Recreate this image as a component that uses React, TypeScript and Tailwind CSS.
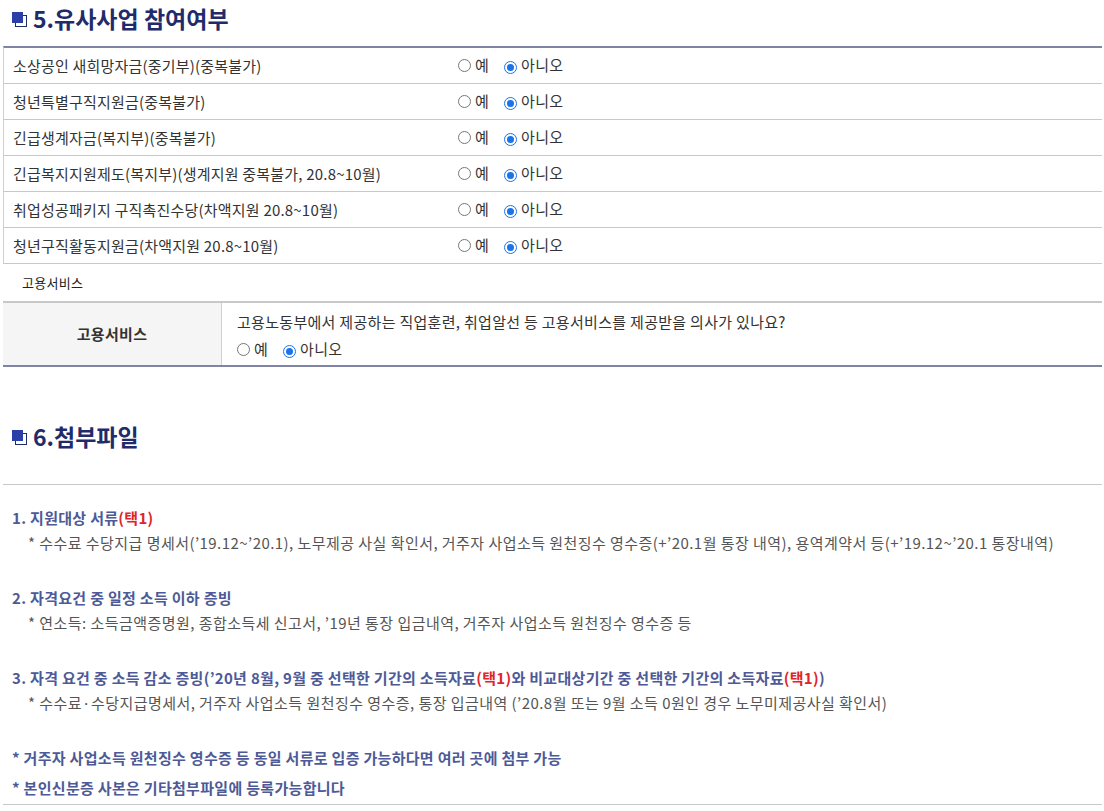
import React from 'react'

const font = { fontFamily: '"Noto Sans CJK KR", "Noto Sans", sans-serif' }

const rows = [
  '소상공인 새희망자금(중기부)(중복불가)',
  '청년특별구직지원금(중복불가)',
  '긴급생계자금(복지부)(중복불가)',
  '긴급복지지원제도(복지부)(생계지원 중복불가, 20.8~10월)',
  '취업성공패키지 구직촉진수당(차액지원 20.8~10월)',
  '청년구직활동지원금(차액지원 20.8~10월)',
]

function Radio({ checked }: { checked?: boolean }) {
  return checked ? (
    <span className="inline-flex w-[13px] h-[13px] rounded-full border-[1.5px] border-[#1a73e8] items-center justify-center bg-white">
      <span className="w-[7px] h-[7px] rounded-full bg-[#1a73e8]" />
    </span>
  ) : (
    <span className="inline-block w-[13px] h-[13px] rounded-full border border-[#767676] bg-white" />
  )
}

function YesNo() {
  return (
    <div className="flex items-center text-[15px] text-[#333] tracking-[0.3px]">
      <Radio />
      <span className="ml-[4px]">예</span>
      <span className="ml-[15px]"><Radio checked /></span>
      <span className="ml-[4px]">아니오</span>
    </div>
  )
}

function Title({ children }: { children: React.ReactNode }) {
  return (
    <div className="flex items-center gap-[6px] pl-[12px]">
      <span className="relative w-[15px] h-[15px] mt-[2px]">
        <span className="absolute left-[3px] top-[3px] w-[12px] h-[12px] border border-[#1f2b6b] bg-white" />
        <span className="absolute left-0 top-0 w-[11px] h-[11px] bg-[#2b3fa8]" />
      </span>
      <span className="text-[23px] font-bold text-[#1f2b6b]">{children}</span>
    </div>
  )
}

export default function App() {
  return (
    <div className="w-[1104px] h-[811px] bg-white overflow-hidden" style={font}>
      <div className="h-[36px] flex items-center">
        <Title>5.유사사업 참여여부</Title>
      </div>

      <div className="mt-[10px] ml-[3px] mr-[2px] border-t-2 border-[#7f84a4] border-l border-l-[#d0d0d0]">
        {rows.map((r) => (
          <div key={r} className="flex items-center h-[36px] border-b border-[#c8c8c8]">
            <div className="w-[454px] pl-[9px] pt-[1px] text-[15px] text-[#333] tracking-[0.2px]">{r}</div>
            <YesNo />
          </div>
        ))}
      </div>

      <div className="h-[37px] flex items-center pl-[22px] text-[13px] text-[#222] tracking-[0.3px]">고용서비스</div>

      <div className="ml-[3px] mr-[2px] flex border-t-2 border-[#c8c8c8] border-b-2 border-b-[#7f84a4]">
        <div className="w-[219px] bg-[#f5f5f5] border-r border-[#d0d0d0] flex items-center justify-center text-[15px] font-bold text-[#333] tracking-[0.3px]">
          고용서비스
        </div>
        <div className="pl-[15px] pt-[7px] text-[15px] text-[#333] tracking-[0.3px]">
          <div className="leading-[24px]">고용노동부에서 제공하는 직업훈련, 취업알선 등 고용서비스를 제공받을 의사가 있나요?</div>
          <div className="h-[31px] flex items-center"><YesNo /></div>
        </div>
      </div>

      <div className="h-[51px]" />
      <div className="h-[36px] flex items-center">
        <Title>6.첨부파일</Title>
      </div>

      <div className="mt-[30px] ml-[3px] mr-[2px] border-t border-[#c8c8c8]" />

      <div className="pl-[12px] text-[15px] tracking-[0.3px]">
        <div className="mt-[22px] leading-[22px] font-semibold text-[#4d5a97]">
          1. 지원대상 서류<span className="text-[#e0242b]">(택1)</span>
        </div>
        <div className="mt-[3px] pl-[16px] leading-[22px] text-[#555] tracking-[0.45px]">
          * 수수료 수당지급 명세서(’19.12~’20.1), 노무제공 사실 확인서, 거주자 사업소득 원천징수 영수증(+’20.1월 통장 내역), 용역계약서 등(+’19.12~’20.1 통장내역)
        </div>

        <div className="mt-[33px] leading-[22px] font-semibold text-[#4d5a97]">2. 자격요건 중 일정 소득 이하 증빙</div>
        <div className="mt-[3px] pl-[16px] leading-[22px] text-[#555] tracking-[0.45px]">
          * 연소득: 소득금액증명원, 종합소득세 신고서, ’19년 통장 입금내역, 거주자 사업소득 원천징수 영수증 등
        </div>

        <div className="mt-[33px] leading-[22px] font-semibold text-[#4d5a97]">
          3. 자격 요건 중 소득 감소 증빙(’20년 8월, 9월 중 선택한 기간의 소득자료<span className="text-[#e0242b]">(택1)</span>와 비교대상기간 중 선택한 기간의 소득자료<span className="text-[#e0242b]">(택1)</span>)
        </div>
        <div className="mt-[3px] pl-[16px] leading-[22px] text-[#555] tracking-[0.45px]">
          * 수수료·수당지급명세서, 거주자 사업소득 원천징수 영수증, 통장 입금내역 (’20.8월 또는 9월 소득 0원인 경우 노무미제공사실 확인서)
        </div>

        <div className="mt-[33px] leading-[22px] font-semibold text-[#4d5a97]">
          * 거주자 사업소득 원천징수 영수증 등 동일 서류로 입증 가능하다면 여러 곳에 첨부 가능
        </div>
        <div className="mt-[8px] leading-[22px] font-semibold text-[#4d5a97]">
          * 본인신분증 사본은 기타첨부파일에 등록가능합니다
        </div>
      </div>

      <div className="mt-[5px] ml-[3px] mr-[2px] border-t border-[#c8c8c8]" />
    </div>
  )
}
